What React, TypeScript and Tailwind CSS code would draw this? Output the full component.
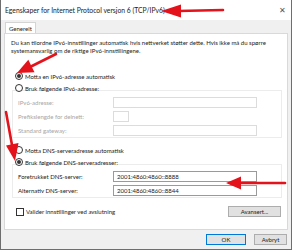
import React from "react";

const Radio = ({ checked }: { checked?: boolean }) => (
  <span className="w-[8px] h-[8px] rounded-full border border-[#333333] bg-white flex items-center justify-center shrink-0">
    {checked && <span className="w-[4px] h-[4px] rounded-full bg-[#333333]" />}
  </span>
);

const Field = ({ label, value, w = "w-[144px]" }: { label: string; value?: string; w?: string }) => {
  const enabled = value !== undefined;
  return (
    <div className="flex items-center h-[14px]">
      <span className={`w-[95px] ${enabled ? "text-[#1a1a1a]" : "text-[#a6a6a6]"}`}>{label}</span>
      <div
        className={`${w} h-[11px] border ${enabled ? "border-[#9a9a9a]" : "border-[#dcdcdc]"} bg-white flex items-center pl-[3px] text-[#1a1a1a]`}
      >
        {value}
      </div>
    </div>
  );
};

export default function App() {
  return (
    <div
      className="relative w-[292px] h-[250px] bg-[#f0f0f0] border-x border-b border-[#6e6e6e] overflow-hidden text-[#1a1a1a] whitespace-nowrap"
      style={{ fontFamily: 'Lato, "Liberation Sans", sans-serif' }}
    >
      {/* Title bar */}
      <div className="h-[20px] bg-white flex items-center justify-between pl-[4px] pr-[5px] text-[6.8px]">
        <span>Egenskaper for Internet Protocol versjon 6 (TCP/IPv6)</span>
        <span className="text-[8px] text-[#555555] leading-none">✕</span>
      </div>

      {/* Tabs */}
      <div className="pl-[4px] pt-[2px] flex">
        <div className="h-[11px] px-[3px] bg-white border border-b-0 border-[#d4d4d4] text-[6px] flex items-center">
          Generelt
        </div>
      </div>

      {/* Panel */}
      <div className="ml-[3px] mr-[3px] h-[197px] bg-white border border-[#d9d9d9] text-[6px] pl-[6px] pr-[5px] pt-[5px]">
        <p className="leading-[8px]">
          Du kan tilordne IPv6-innstillinger automatisk hvis nettverket støtter dette. Hvis ikke må du spørre
          <br />
          systemansvarlig om de riktige IPv6-innstillingene.
        </p>

        <div className="mt-[15px] pl-[4px] flex items-center gap-[2px] h-[12px]">
          <Radio checked />
          <span>Motta en IPv6-adresse automatisk</span>
        </div>
        <div className="pl-[4px] flex items-center gap-[2px] h-[12px]">
          <Radio />
          <span>Bruk følgende IPv6-adresse:</span>
        </div>
        <div className="-mt-[4px] ml-[1px] border border-[#ececec] pt-[4px] pl-[5px]">
          <Field label="IPv6-adresse:" />
          <Field label="Prefikslengde for delnett:" w="w-[16px]" />
          <Field label="Standard gateway:" />
        </div>

        <div className="mt-[6px] pl-[4px] flex items-center gap-[2px] h-[12px]">
          <Radio />
          <span>Motta DNS-serveradresse automatisk</span>
        </div>
        <div className="pl-[4px] flex items-center gap-[2px] h-[12px]">
          <Radio checked />
          <span>Bruk følgende DNS-serveradresser:</span>
        </div>
        <div className="-mt-[4px] ml-[1px] border border-[#ececec] pt-[4px] pl-[5px]">
          <Field label="Foretrukket DNS-server:" value="2001:4860:4860::8888" />
          <Field label="Alternativ DNS-server:" value="2001:4860:4860::8844" />
        </div>

        <div className="mt-[8px] h-[11px] flex items-center justify-between pl-[5px] pr-[1px]">
          <div className="flex items-center gap-[2px]">
            <span className="w-[8px] h-[8px] border border-[#333333] bg-white" />
            <span>Valider innstillinger ved avslutning</span>
          </div>
          <button className="w-[53px] h-[11px] bg-[#e1e1e1] border border-[#adadad] text-[6px] flex items-center justify-center">
            Avansert...
          </button>
        </div>
      </div>

      {/* Footer buttons */}
      <div className="flex justify-end gap-[8px] pr-[4px] pt-[4px] text-[6px]">
        <button className="w-[40px] h-[11px] bg-[#e1e1e1] border border-[#0078d7] flex items-center justify-center">
          OK
        </button>
        <button className="w-[33px] h-[11px] bg-[#e1e1e1] border border-[#adadad] flex items-center justify-center">
          Avbryt
        </button>
      </div>

      {/* Red annotation arrows */}
      <svg className="absolute inset-0 pointer-events-none" width="292" height="250" viewBox="0 0 292 250">
        <g stroke="#e3121b" strokeWidth="2.6" strokeLinecap="round" fill="#e3121b">
          <line x1="222" y1="10" x2="177" y2="11" />
          <polygon points="160,11 180,4.5 180,17.5" stroke="none" />

          <line x1="55" y1="54" x2="31" y2="66" />
          <polygon points="16,73 33.5,72.3 27.3,59.7" stroke="none" />

          <line x1="5" y1="112" x2="11" y2="145" />
          <polygon points="14,161 17.5,143 5,145.5" stroke="none" />

          <line x1="284" y1="183" x2="238" y2="183" />
          <polygon points="225,183 240,176.5 240,189.5" stroke="none" />
        </g>
      </svg>
    </div>
  );
}
